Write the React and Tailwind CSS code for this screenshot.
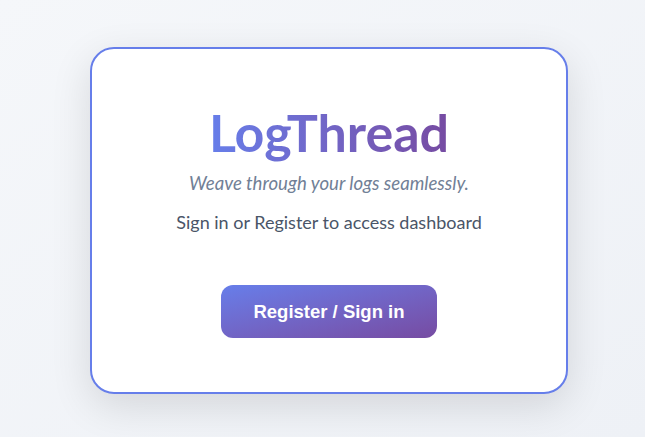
import React from 'react';

export default function App() {
    return (
        <div
            className="min-h-screen w-full flex items-center justify-center bg-gradient-to-br from-[#f5f7fa] to-[#eef1f6] pl-[13px] pt-[4px]"
            style={{ fontFamily: 'Lato, "Noto Sans", sans-serif' }}
        >
            <div className="w-[478px] h-[347px] bg-white border-2 border-[#667eea] rounded-[24px] shadow-[0_12px_40px_rgba(0,0,0,0.12)] flex flex-col items-center pt-[52px]">
                <h1 className="text-[52px] leading-[62px] font-bold bg-gradient-to-r from-[#667eea] to-[#764ba2] bg-clip-text text-transparent">
                    LogThread
                </h1>
                <p className="mt-[7px] text-[18.6px] italic text-[#718096]">
                    Weave through your logs seamlessly.
                </p>
                <p className="mt-[11px] text-[18px] text-[#4a5568]">
                    Sign in or Register to access dashboard
                </p>
                <button
                    className="mt-[49px] w-[216px] h-[53px] rounded-[12px] bg-gradient-to-br from-[#667eea] to-[#764ba2] text-white text-[18.5px] font-bold"
                    style={{ fontFamily: '"Liberation Sans", Arial, sans-serif' }}
                >
                    Register / Sign in
                </button>
            </div>
        </div>
    );
}
